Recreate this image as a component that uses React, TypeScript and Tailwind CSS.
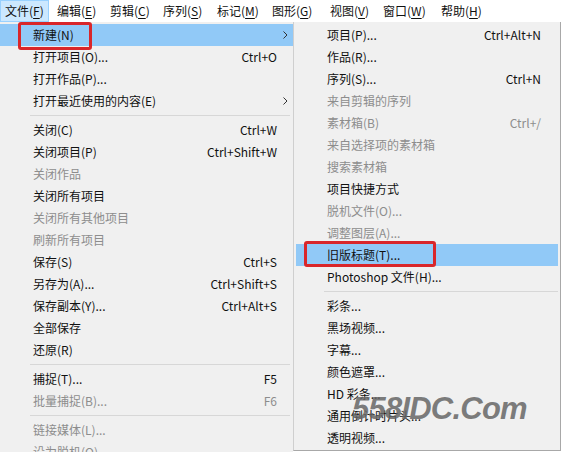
import React from 'react';

type Item =
  | { sep: true }
  | { label: string; key?: string; off?: boolean; arrow?: boolean; active?: boolean; sep?: false };

// [name, access key, width class]
const topMenu = [
  ['文件', 'F', 'w-[53px]'],
  ['编辑', 'E', 'w-[53px]'],
  ['剪辑', 'C', 'w-[53px]'],
  ['序列', 'S', 'w-[54px]'],
  ['标记', 'M', 'w-[55px]'],
  ['图形', 'G', 'w-[58px]'],
  ['视图', 'V', 'w-[53px]'],
  ['窗口', 'W', 'w-[58px]'],
  ['帮助', 'H', 'w-[58px]'],
];

const fileMenu: Item[] = [
  { label: '新建(N)', arrow: true, active: true },
  { label: '打开项目(O)...', key: 'Ctrl+O' },
  { label: '打开作品(P)...' },
  { label: '打开最近使用的内容(E)', arrow: true },
  { sep: true },
  { label: '关闭(C)', key: 'Ctrl+W' },
  { label: '关闭项目(P)', key: 'Ctrl+Shift+W' },
  { label: '关闭作品', off: true },
  { label: '关闭所有项目' },
  { label: '关闭所有其他项目', off: true },
  { label: '刷新所有项目', off: true },
  { label: '保存(S)', key: 'Ctrl+S' },
  { label: '另存为(A)...', key: 'Ctrl+Shift+S' },
  { label: '保存副本(Y)...', key: 'Ctrl+Alt+S' },
  { label: '全部保存' },
  { label: '还原(R)' },
  { sep: true },
  { label: '捕捉(T)...', key: 'F5' },
  { label: '批量捕捉(B)...', key: 'F6', off: true },
  { sep: true },
  { label: '链接媒体(L)...', off: true },
  { label: '设为脱机(O)...', off: true },
];

const newMenu: Item[] = [
  { label: '项目(P)...', key: 'Ctrl+Alt+N' },
  { label: '作品(R)...' },
  { label: '序列(S)...', key: 'Ctrl+N' },
  { label: '来自剪辑的序列', off: true },
  { label: '素材箱(B)', key: 'Ctrl+/', off: true },
  { label: '来自选择项的素材箱', off: true },
  { label: '搜索素材箱', off: true },
  { label: '项目快捷方式' },
  { label: '脱机文件(O)...', off: true },
  { label: '调整图层(A)...', off: true },
  { label: '旧版标题(T)...', active: true },
  { label: 'Photoshop 文件(H)...' },
  { sep: true },
  { label: '彩条...' },
  { label: '黑场视频...' },
  { label: '字幕...' },
  { label: '颜色遮罩...' },
  { label: 'HD 彩条...' },
  { label: '通用倒计时片头...' },
  { label: '透明视频...' },
];

function Chevron() {
  return (
    <svg width="5" height="8" viewBox="0 0 5 8" className="shrink-0">
      <path d="M0.5 0.5 L4 4 L0.5 7.5" fill="none" stroke="#333" strokeWidth="1" />
    </svg>
  );
}

function MenuList({ items, sepClass, rowClass, keyPad }: { items: Item[]; sepClass: string; rowClass: string; keyPad: string }) {
  return (
    <div className="flex flex-col pt-[2px]">
      {items.map((it, i) =>
        it.sep ? (
          <div key={i} className={`py-[3px] ${sepClass}`}>
            <div className="h-px bg-[#d7d7d7]" />
          </div>
        ) : (
          <div
            key={i}
            className={`flex items-center h-[22px] shrink-0 leading-[22px] whitespace-nowrap ${rowClass} ${
              it.active ? 'bg-[#91c9f7]' : ''
            } ${it.off ? 'text-[#8d8d8d]' : 'text-[#111]'}`}
          >
            <span className="flex-1">{it.label}</span>
            {it.key && <span className={keyPad}>{it.key}</span>}
            {it.arrow && <span className="pr-[5px] pl-2 flex items-center"><Chevron /></span>}
          </div>
        )
      )}
    </div>
  );
}

export default function App() {
  return (
    <div
      className="relative w-[563px] h-[452px] overflow-hidden bg-white text-[12px]"
      style={{ fontFamily: '"Noto Sans CJK SC", "Noto Sans", sans-serif' }}
    >
      {/* menu bar */}
      <div className="flex h-[22px] items-stretch bg-white">
        {topMenu.map(([name, k, w], i) => (
          <div key={name} className={`flex shrink-0 ${w}`}>
            <div
              className={`flex items-center leading-none pl-[4px] pr-[3px] text-[#111] ${
                i === 0 ? 'bg-[#cce8ff] border border-[#99d1ff] pl-[3px] pr-[3px] w-[49px]' : ''
              }`}
            >
              {name}(<span className="underline underline-offset-2">{k}</span>)
            </div>
          </div>
        ))}
      </div>

      <div className="flex h-[430px]">
        {/* 文件 menu */}
        <div className="w-[293px] shrink-0 bg-[#f0f0f0] overflow-hidden">
          <MenuList items={fileMenu} sepClass="pl-[30px] pr-[3px]" rowClass="pl-[33px] pr-0" keyPad="pr-[16px]" />
        </div>
        {/* 新建 submenu */}
        <div className="w-[268px] shrink-0 bg-[#f0f0f0] border-l border-r border-b border-[#a8a8a8] border-l-[#cfcfcf] h-[429px] overflow-hidden">
          <div className="px-[2px]">
            <MenuList items={newMenu} sepClass="pl-[28px] pr-0" rowClass="pl-[31px]" keyPad="pr-[17px]" />
          </div>
        </div>
        <div className="flex-1 bg-white" />
      </div>

      {/* red highlight boxes */}
      <div className="absolute left-[18px] top-[22px] w-[74px] h-[28px] border-[3px] border-[#d9262a] rounded-[3px]" />
      <div className="absolute left-[304px] top-[241px] w-[132px] h-[26px] border-[3px] border-[#d9262a] rounded-[3px]" />

      {/* watermark */}
      <div
        className="absolute left-[352px] top-[393px] text-[31px] font-bold italic leading-none tracking-tight text-[#666]/85"
        style={{ fontFamily: '"Liberation Sans", Arial, sans-serif' }}
      >
        558IDC.Com
      </div>
    </div>
  );
}
